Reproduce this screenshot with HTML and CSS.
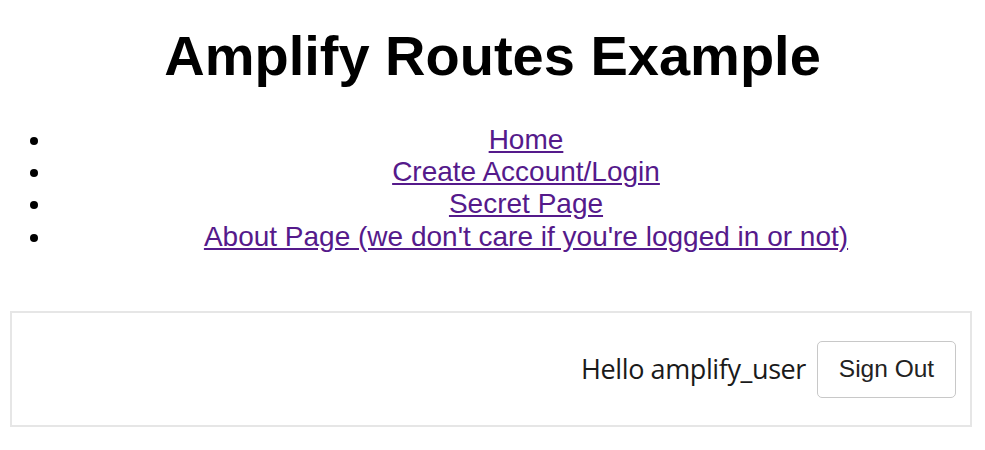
FILE: index.html
```html
<!DOCTYPE html>
<html lang="en">
<head>
<meta charset="utf-8">
<title>Amplify Routes Example</title>
<link rel="stylesheet" href="styles.css">
</head>
<body>
<h1 class="title">Amplify Routes Example</h1>
<ul class="nav">
  <li class="nav-item"><a class="nav-link" href="#">Home</a></li>
  <li class="nav-item"><a class="nav-link" href="#">Create Account/Login</a></li>
  <li class="nav-item"><a class="nav-link" href="#">Secret Page</a></li>
  <li class="nav-item"><a class="nav-link" href="#">About Page (we don't care if you're logged in or not)</a></li>
</ul>
<div class="greetings">
  <span class="hello">Hello amplify_user</span>
  <button class="signout" type="button">Sign Out</button>
</div>
</body>
</html>
```
FILE: styles.css
```css
html, body {
  background: #ffffff;
}
body {
  margin: 8px;
  font-family: "Liberation Sans", Arial, sans-serif;
  color: #000;
}
.title {
  margin: 15px 0 36px;
  font-size: 56px;
  font-weight: bold;
  text-align: center;
  line-height: normal;
}
.nav {
  margin: 0;
  padding: 0 0 0 45px;
  font-size: 28px;
  line-height: 32.2px;
}
.nav-item {
  text-align: center;
  padding-left: 22px;
}
.nav-link {
  color: #551a8b;
  text-decoration: underline;
}
.greetings {
  margin: 58px 5px 0 2px;
  border: 2px solid #e6e6e6;
  padding: 0 14px;
  height: 112px;
  display: flex;
  justify-content: flex-end;
  align-items: center;
  gap: 11px;
}
.hello {
  font-family: "Open Sans", "Noto Sans", sans-serif;
  font-size: 27px;
  letter-spacing: -0.4px;
  color: #1a1a1a;
}
.signout {
  font-family: "Liberation Sans", Arial, sans-serif;
  font-size: 24.5px;
  color: #222;
  background: #fff;
  border: 1.5px solid #c8c8c8;
  border-radius: 5px;
  width: 139px;
  height: 57px;
  padding: 0;
  margin-top: 1px;
}
```
